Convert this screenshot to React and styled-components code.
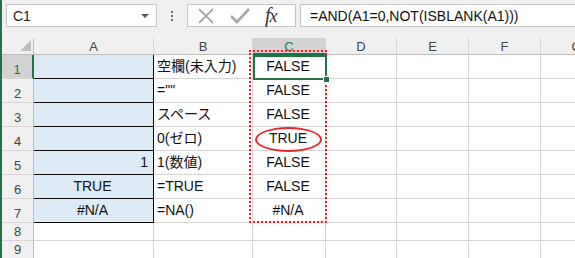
import React from 'react';
import styled, { createGlobalStyle } from 'styled-components';

const GlobalStyle = createGlobalStyle`
  body {
    margin: 0;
    background: #ffffff;
    font-family: "Liberation Sans", "Noto Sans CJK JP", sans-serif;
  }
`

const Frame = styled.div`
  width: 573px;
  height: 258px;
  border-left: 2px solid #217346;
  overflow: hidden;
  background: #ffffff;
`

const FormulaBar = styled.div`
  height: 38px;
  box-sizing: border-box;
  padding: 4px 0 0 4px;
  background: #f0f0f0;
  display: flex;
  align-items: flex-start;
`

const NameBox = styled.div`
  width: 151px;
  height: 23px;
  box-sizing: border-box;
  border: 1px solid #c6c6c6;
  background: #ffffff;
  display: flex;
  align-items: center;
  justify-content: space-between;
  padding: 0 7px 0 6px;
  font-size: 14px;
  color: #222;
`

const Caret = styled.span`
  width: 0;
  height: 0;
  border-left: 4px solid transparent;
  border-right: 4px solid transparent;
  border-top: 4px solid #555;
`

const Dots = styled.div`
  width: 30px;
  height: 23px;
  display: flex;
  flex-direction: column;
  align-items: center;
  justify-content: center;
  gap: 2px;

  span {
    width: 2px;
    height: 2px;
    background: #666;
  }
`

const ButtonBox = styled.div`
  width: 109px;
  height: 23px;
  box-sizing: border-box;
  border: 1px solid #c6c6c6;
  background: #ffffff;
  display: flex;
  align-items: center;
  padding-left: 9px;
  gap: 15px;
`

const FxLabel = styled.span`
  font-family: "Liberation Serif", serif;
  font-style: italic;
  font-size: 18px;
  color: #333;
  letter-spacing: -1px;

  b {
    font-weight: normal;
    font-size: 20px;
  }
`

const FormulaInput = styled.div`
  flex: 1;
  height: 23px;
  box-sizing: border-box;
  margin-left: 4px;
  border: 1px solid #c6c6c6;
  border-right: none;
  background: #ffffff;
  display: flex;
  align-items: center;
  padding-left: 9px;
  font-size: 14px;
  color: #111;
  white-space: nowrap;
`

const Sheet = styled.div`
  position: relative;
  display: grid;
  grid-template-columns: 32px 120px 99px 73px 71px 72px 72px 72px;
  grid-template-rows: 17px repeat(7, 24px) repeat(2, 18px);
`

const Corner = styled.div`
  position: relative;
  background: #f0f0f0;
  border-right: 1px solid #bdbdbd;
  border-bottom: 1px solid #bdbdbd;
  box-sizing: border-box;

  &::after {
    content: '';
    position: absolute;
    right: 2px;
    bottom: 3px;
    width: 0;
    height: 0;
    border-left: 11px solid transparent;
    border-bottom: 11px solid #bfbfbf;
  }
`

const ColHeader = styled.div`
  box-sizing: border-box;
  background: ${p => (p.$active ? '#d2d2d2' : '#f0f0f0')};
  border-right: 1px solid #d5d5d5;
  border-bottom: ${p => (p.$active ? '2px solid #217346' : '1px solid #bdbdbd')};
  display: flex;
  align-items: center;
  justify-content: center;
  font-size: 13px;
  color: ${p => (p.$active ? '#217346' : '#444')};
  padding-top: 1px;
`

const RowHeader = styled.div`
  box-sizing: border-box;
  background: ${p => (p.$active ? '#d2d2d2' : '#f0f0f0')};
  border-right: ${p => (p.$active ? '2px solid #217346' : '1px solid #bdbdbd')};
  border-bottom: 1px solid #d5d5d5;
  display: flex;
  align-items: flex-end;
  justify-content: center;
  padding-bottom: 1px;
  font-size: 13px;
  line-height: 15px;
  color: ${p => (p.$active ? '#217346' : '#444')};
`

const Cell = styled.div`
  box-sizing: border-box;
  background: ${p => (p.$fill ? '#ddebf7' : '#ffffff')};
  border-right: 1px solid ${p => (p.$boxed ? '#000000' : '#d4d4d4')};
  border-bottom: 1px solid ${p => (p.$boxed ? '#000000' : '#d4d4d4')};
  display: flex;
  align-items: flex-end;
  justify-content: ${p => ({ left: 'flex-start', center: 'center', right: 'flex-end' }[p.$align] || 'flex-start')};
  padding: 0 5px 3px 3px;
  font-size: 14px;
  line-height: 17px;
  color: #111;
  white-space: nowrap;
  overflow: hidden;
`

const CopyMarquee = styled.div`
  position: absolute;
  left: 247px;
  top: 12px;
  width: 78px;
  height: 173px;
  box-sizing: border-box;
  border: 2px dotted #ff1a1a;
  pointer-events: none;
`

const Selection = styled.div`
  position: absolute;
  left: 251px;
  top: 17px;
  width: 74px;
  height: 25px;
  box-sizing: border-box;
  border: 2px solid #217346;

  &::after {
    content: '';
    position: absolute;
    right: -5px;
    bottom: -5px;
    width: 5px;
    height: 5px;
    background: #217346;
    border: 1px solid #ffffff;
  }
`

const Circle = styled.div`
  position: absolute;
  left: 253px;
  top: 89px;
  width: 67px;
  height: 25px;
  box-sizing: border-box;
  border: 2px solid #e8262b;
  border-radius: 50%;
`

const columns = ['A', 'B', 'C', 'D', 'E', 'F', 'G'];

const rows = [
  { a: '', b: '空欄(未入力)', c: 'FALSE' },
  { a: '', b: '=""', c: 'FALSE' },
  { a: '', b: 'スペース', c: 'FALSE' },
  { a: '', b: '0(ゼロ)', c: 'TRUE' },
  { a: '1', aAlign: 'right', b: '1(数値)', c: 'FALSE' },
  { a: 'TRUE', aAlign: 'center', b: '=TRUE', c: 'FALSE' },
  { a: '#N/A', aAlign: 'center', b: '=NA()', c: '#N/A' },
];

const Cross = () => (
  <svg width="18" height="18" viewBox="0 0 18 18">
    <path d="M2 2 L16 16 M16 2 L2 16" stroke="#a8a8a8" strokeWidth="1.8" fill="none" />
  </svg>
);

const Check = () => (
  <svg width="20" height="18" viewBox="0 0 20 18">
    <path d="M1 9 L7 15 L19 2" stroke="#a8a8a8" strokeWidth="2.6" fill="none" />
  </svg>
);

const App = () => {
  return (
    <Frame>
      <GlobalStyle />
      <FormulaBar>
        <NameBox>
          C1
          <Caret />
        </NameBox>
        <Dots><span /><span /><span /></Dots>
        <ButtonBox>
          <Cross />
          <Check />
          <FxLabel><b>f</b>x</FxLabel>
        </ButtonBox>
        <FormulaInput>=AND(A1=0,NOT(ISBLANK(A1)))</FormulaInput>
      </FormulaBar>
      <Sheet>
        <Corner />
        {columns.map(c => (
          <ColHeader key={c} $active={c === 'C'}>{c}</ColHeader>
        ))}
        {rows.map((r, i) => (
          <React.Fragment key={i}>
            <RowHeader $active={i === 0}>{i + 1}</RowHeader>
            <Cell $fill $boxed $align={r.aAlign}>{r.a}</Cell>
            <Cell>{r.b}</Cell>
            <Cell $align="center">{r.c}</Cell>
            <Cell />
            <Cell />
            <Cell />
            <Cell />
          </React.Fragment>
        ))}
        {[8, 9].map(n => (
          <React.Fragment key={n}>
            <RowHeader>{n}</RowHeader>
            {columns.map(c => <Cell key={c} />)}
          </React.Fragment>
        ))}
        <CopyMarquee />
        <Circle />
        <Selection />
      </Sheet>
    </Frame>
  );
};

export default App;
